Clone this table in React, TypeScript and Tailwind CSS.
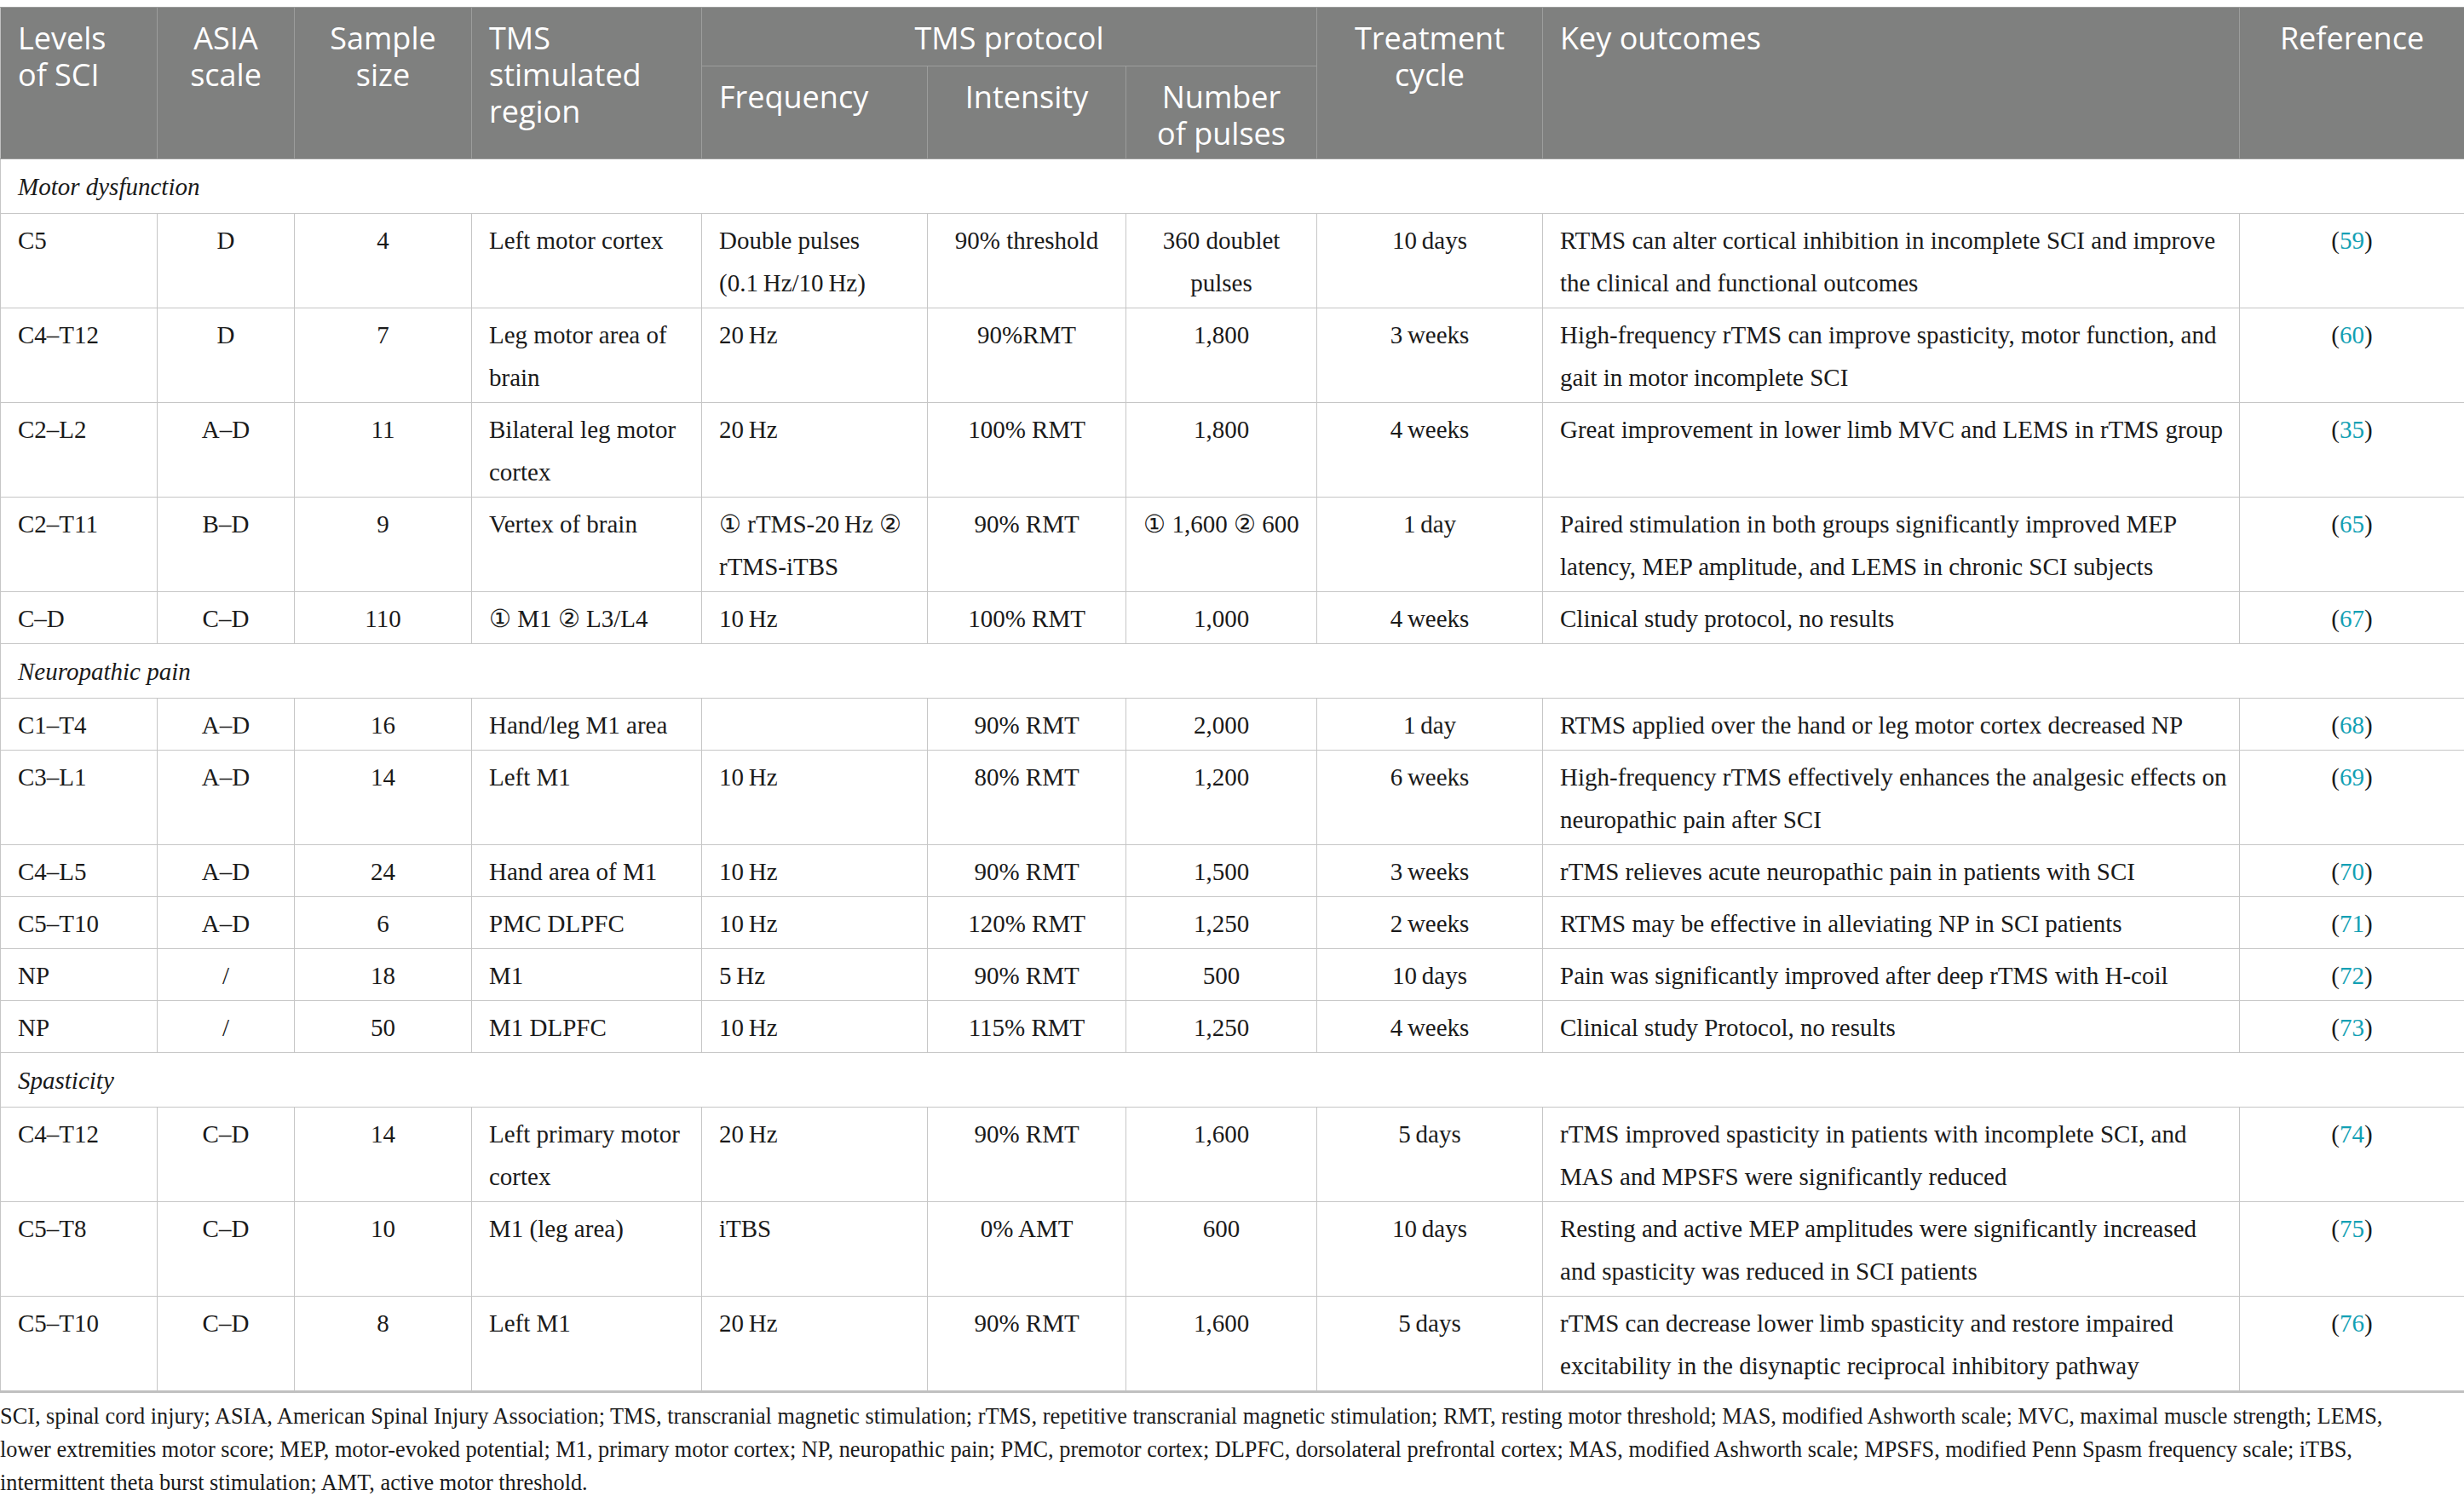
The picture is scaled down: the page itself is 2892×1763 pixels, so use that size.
import React from "react";

const serif = { fontFamily: '"Liberation Serif", "DejaVu Serif", serif' };
const T = "\u2009";

type Row = {
  lvl: string;
  asia: string;
  n: string;
  region: string[];
  freq: string[];
  inten: string;
  pulses: string[];
  cycle: string;
  out: string[];
  ref: string;
};

const sections: { title: string; rows: Row[] }[] = [
  {
    title: "Motor dysfunction",
    rows: [
      { lvl: "C5", asia: "D", n: "4", region: ["Left motor cortex"], freq: ["Double pulses", `(0.1${T}Hz/10${T}Hz)`], inten: "90% threshold", pulses: ["360 doublet", "pulses"], cycle: `10${T}days`, out: ["RTMS can alter cortical inhibition in incomplete SCI and improve", "the clinical and functional outcomes"], ref: "59" },
      { lvl: "C4–T12", asia: "D", n: "7", region: ["Leg motor area of", "brain"], freq: [`20${T}Hz`], inten: "90%RMT", pulses: ["1,800"], cycle: `3${T}weeks`, out: ["High-frequency rTMS can improve spasticity, motor function, and", "gait in motor incomplete SCI"], ref: "60" },
      { lvl: "C2–L2", asia: "A–D", n: "11", region: ["Bilateral leg motor", "cortex"], freq: [`20${T}Hz`], inten: "100% RMT", pulses: ["1,800"], cycle: `4${T}weeks`, out: ["Great improvement in lower limb MVC and LEMS in rTMS group"], ref: "35" },
      { lvl: "C2–T11", asia: "B–D", n: "9", region: ["Vertex of brain"], freq: [`① rTMS-20${T}Hz ②`, "rTMS-iTBS"], inten: "90% RMT", pulses: ["① 1,600 ② 600"], cycle: `1${T}day`, out: ["Paired stimulation in both groups significantly improved MEP", "latency, MEP amplitude, and LEMS in chronic SCI subjects"], ref: "65" },
      { lvl: "C–D", asia: "C–D", n: "110", region: ["① M1 ② L3/L4"], freq: [`10${T}Hz`], inten: "100% RMT", pulses: ["1,000"], cycle: `4${T}weeks`, out: ["Clinical study protocol, no results"], ref: "67" },
    ],
  },
  {
    title: "Neuropathic pain",
    rows: [
      { lvl: "C1–T4", asia: "A–D", n: "16", region: ["Hand/leg M1 area"], freq: [""], inten: "90% RMT", pulses: ["2,000"], cycle: `1${T}day`, out: ["RTMS applied over the hand or leg motor cortex decreased NP"], ref: "68" },
      { lvl: "C3–L1", asia: "A–D", n: "14", region: ["Left M1"], freq: [`10${T}Hz`], inten: "80% RMT", pulses: ["1,200"], cycle: `6${T}weeks`, out: ["High-frequency rTMS effectively enhances the analgesic effects on", "neuropathic pain after SCI"], ref: "69" },
      { lvl: "C4–L5", asia: "A–D", n: "24", region: ["Hand area of M1"], freq: [`10${T}Hz`], inten: "90% RMT", pulses: ["1,500"], cycle: `3${T}weeks`, out: ["rTMS relieves acute neuropathic pain in patients with SCI"], ref: "70" },
      { lvl: "C5–T10", asia: "A–D", n: "6", region: ["PMC DLPFC"], freq: [`10${T}Hz`], inten: "120% RMT", pulses: ["1,250"], cycle: `2${T}weeks`, out: ["RTMS may be effective in alleviating NP in SCI patients"], ref: "71" },
      { lvl: "NP", asia: "/", n: "18", region: ["M1"], freq: [`5${T}Hz`], inten: "90% RMT", pulses: ["500"], cycle: `10${T}days`, out: ["Pain was significantly improved after deep rTMS with H-coil"], ref: "72" },
      { lvl: "NP", asia: "/", n: "50", region: ["M1 DLPFC"], freq: [`10${T}Hz`], inten: "115% RMT", pulses: ["1,250"], cycle: `4${T}weeks`, out: ["Clinical study Protocol, no results"], ref: "73" },
    ],
  },
  {
    title: "Spasticity",
    rows: [
      { lvl: "C4–T12", asia: "C–D", n: "14", region: ["Left primary motor", "cortex"], freq: [`20${T}Hz`], inten: "90% RMT", pulses: ["1,600"], cycle: `5${T}days`, out: ["rTMS improved spasticity in patients with incomplete SCI, and", "MAS and MPSFS were significantly reduced"], ref: "74" },
      { lvl: "C5–T8", asia: "C–D", n: "10", region: ["M1 (leg area)"], freq: ["iTBS"], inten: "0% AMT", pulses: ["600"], cycle: `10${T}days`, out: ["Resting and active MEP amplitudes were significantly increased", "and spasticity was reduced in SCI patients"], ref: "75" },
      { lvl: "C5–T10", asia: "C–D", n: "8", region: ["Left M1"], freq: [`20${T}Hz`], inten: "90% RMT", pulses: ["1,600"], cycle: `5${T}days`, out: ["rTMS can decrease lower limb spasticity and restore impaired", "excitability in the disynaptic reciprocal inhibitory pathway"], ref: "76" },
    ],
  },
];

function Lines({ lines }: { lines: string[] }) {
  return (
    <>
      {lines.map((l, i) => (
        <React.Fragment key={i}>
          {i > 0 && <br />}
          {l}
        </React.Fragment>
      ))}
    </>
  );
}

const td = "border border-[#c6c6c6] align-top pt-[6px] pb-[4px] px-[20px] whitespace-nowrap";
const th = "border border-[#9c9d9c] align-top pt-[14px] px-[20px] font-normal";

export default function App() {
  return (
    <div className="bg-white w-[2892px] text-[#1a1a1a]">
      <table
        className="mt-[8px] w-[2892px] table-fixed border-collapse border-t border-b-[3px] border-[#c0c0c0] text-[29px] leading-[50px]"
        style={serif}
      >
        <colgroup>
          <col className="w-[184px]" />
          <col className="w-[161px]" />
          <col className="w-[208px]" />
          <col className="w-[270px]" />
          <col className="w-[265px]" />
          <col className="w-[233px]" />
          <col className="w-[224px]" />
          <col className="w-[265px]" />
          <col className="w-[818px]" />
          <col className="w-[264px]" />
        </colgroup>
        <thead
          className="bg-[#7f807f] text-white text-[36px] leading-[43px]"
          style={{ fontFamily: '"Open Sans", "Noto Sans", sans-serif' }}
        >
          <tr className="h-[69px]">
            <th rowSpan={2} className={`${th} text-left border-l-[#c0c0c0]`}>Levels<br />of SCI</th>
            <th rowSpan={2} className={`${th} text-center`}>ASIA<br />scale</th>
            <th rowSpan={2} className={`${th} text-center`}>Sample<br />size</th>
            <th rowSpan={2} className={`${th} text-left`}>TMS<br />stimulated<br />region</th>
            <th colSpan={3} className={`${th} text-center`}>TMS protocol</th>
            <th rowSpan={2} className={`${th} text-center`}>Treatment<br />cycle</th>
            <th rowSpan={2} className={`${th} text-left`}>Key outcomes</th>
            <th rowSpan={2} className={`${th} text-center border-r-[#c0c0c0]`}>Reference</th>
          </tr>
          <tr className="h-[109px]">
            <th className={`${th} text-left`}>Frequency</th>
            <th className={`${th} text-center`}>Intensity</th>
            <th className={`${th} text-center`}>Number<br />of pulses</th>
          </tr>
        </thead>
        <tbody>
          {sections.map((s) => (
            <React.Fragment key={s.title}>
              <tr>
                <td colSpan={10} className="border border-[#c6c6c6] pt-[7px] pb-[6px] px-[20px] italic text-left">
                  {s.title}
                </td>
              </tr>
              {s.rows.map((r, i) => (
                <tr key={i}>
                  <td className={`${td} text-left`}>{r.lvl}</td>
                  <td className={`${td} text-center`}>{r.asia}</td>
                  <td className={`${td} text-center`}>{r.n}</td>
                  <td className={`${td} text-left`}><Lines lines={r.region} /></td>
                  <td className={`${td} text-left`}><Lines lines={r.freq} /></td>
                  <td className={`${td} text-center`}>{r.inten}</td>
                  <td className={`${td} text-center`}><Lines lines={r.pulses} /></td>
                  <td className={`${td} text-center`}>{r.cycle}</td>
                  <td className={`${td} text-left`}><Lines lines={r.out} /></td>
                  <td className={`${td} text-center`}>
                    (<span className="text-[#12a0b4]">{r.ref}</span>)
                  </td>
                </tr>
              ))}
            </React.Fragment>
          ))}
        </tbody>
      </table>
      <p className="mt-[8px] text-[26.3px] leading-[39px] whitespace-nowrap" style={serif}>
        SCI, spinal cord injury; ASIA, American Spinal Injury Association; TMS, transcranial magnetic stimulation; rTMS, repetitive transcranial magnetic stimulation; RMT, resting motor threshold; MAS, modified Ashworth scale; MVC, maximal muscle strength; LEMS,
        <br />
        lower extremities motor score; MEP, motor-evoked potential; M1, primary motor cortex; NP, neuropathic pain; PMC, premotor cortex; DLPFC, dorsolateral prefrontal cortex; MAS, modified Ashworth scale; MPSFS, modified Penn Spasm frequency scale; iTBS,
        <br />
        intermittent theta burst stimulation; AMT, active motor threshold.
      </p>
    </div>
  );
}
